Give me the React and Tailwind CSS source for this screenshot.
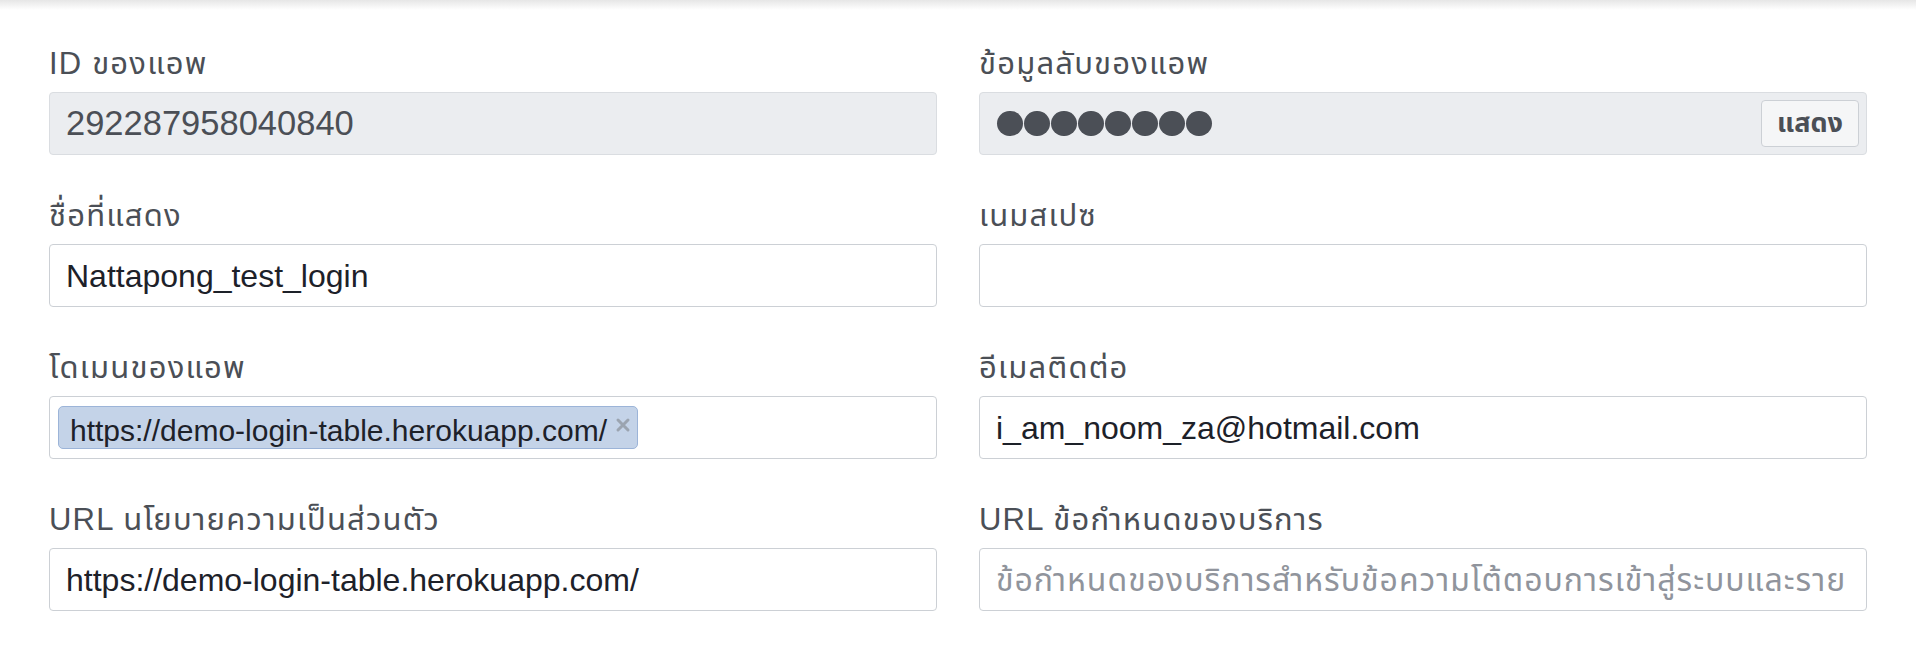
import React from 'react';

const thai = "font-['Liberation_Sans','Noto_Sans_Thai','Noto_Sans_Thai_Looped','Noto_Sans',sans-serif]";

function Field({ label, children }) {
  return (
    <div className="flex flex-col">
      <label className={`${thai} h-[44px] leading-[44px] mb-[6px] text-[31px] tracking-[1.2px] text-[#4b4f56] whitespace-nowrap`}>
        {label}
      </label>
      {children}
    </div>
  );
}

function Box({ disabled, children, className = '' }) {
  return (
    <div
      className={`h-[63px] rounded-[4px] border flex items-center overflow-hidden ${
        disabled ? 'bg-[#ebedf0] border-[#dadde1]' : 'bg-white border-[#ccd0d5]'
      } ${className}`}
    >
      {children}
    </div>
  );
}

export default function App() {
  return (
    <div className="relative bg-white min-h-[648px] w-[1916px]">
      <div className="absolute top-0 left-0 right-0 h-[10px] bg-gradient-to-b from-[#e6e6e6] to-white" />
      <div className="relative grid grid-cols-2 gap-x-[42px] gap-y-[39px] px-[49px] pt-[42px]">
        <Field label="ID ของแอพ">
          <Box disabled className="pl-[16px]">
            <span className="font-['Liberation_Sans',sans-serif] text-[34.5px] text-[#4b4f56]">292287958040840</span>
          </Box>
        </Field>

        <Field label="ข้อมูลลับของแอพ">
          <Box disabled className="pl-[17px] pr-[7px] justify-between">
            <div className="flex gap-[1px]">
              {Array.from({ length: 8 }).map((_, i) => (
                <span key={i} className="w-[26px] h-[25px] rounded-full bg-[#4b4f56]" />
              ))}
            </div>
            <button
              type="button"
              className={`${thai} h-[47px] w-[98px] rounded-[4px] border border-[#ccd0d5] bg-[#f5f6f7] text-[27px] font-bold text-[#4b4f56]`}
            >
              แสดง
            </button>
          </Box>
        </Field>

        <Field label="ชื่อที่แสดง">
          <Box className="pl-[16px]">
            <span className="font-['Liberation_Sans',sans-serif] text-[32px] text-[#1d2129]">Nattapong_test_login</span>
          </Box>
        </Field>

        <Field label="เนมสเปซ">
          <Box />
        </Field>

        <Field label="โดเมนของแอพ">
          <Box className="pl-[8px]">
            <div className="h-[43px] flex items-center rounded-[5px] border border-[#9cb4d8] bg-[#c4d3e8] pl-[11px] pr-[6px]">
              <span className="font-['Liberation_Sans',sans-serif] text-[30px] text-[#1d2129] leading-none mt-[6px]">
                https://demo-login-table.herokuapp.com/
              </span>
              <svg className="ml-[8px] -mt-[6px]" width="16" height="16" viewBox="0 0 16 16">
                <path d="M3 3 L13 13 M13 3 L3 13" stroke="#9ba4b0" strokeWidth="3" strokeLinecap="round" />
              </svg>
            </div>
          </Box>
        </Field>

        <Field label="อีเมลติดต่อ">
          <Box className="pl-[16px]">
            <span className="font-['Liberation_Sans',sans-serif] text-[32px] text-[#1d2129]">i_am_noom_za@hotmail.com</span>
          </Box>
        </Field>

        <Field label="URL นโยบายความเป็นส่วนตัว">
          <Box className="pl-[16px]">
            <span className="font-['Liberation_Sans',sans-serif] text-[32px] text-[#1d2129]">https://demo-login-table.herokuapp.com/</span>
          </Box>
        </Field>

        <Field label="URL ข้อกำหนดของบริการ">
          <Box className="pl-[16px]">
            <span className={`${thai} text-[32px] tracking-[1px] text-[#90949c] whitespace-nowrap`}>
              ข้อกำหนดของบริการสำหรับข้อความโต้ตอบการเข้าสู่ระบบและราย
            </span>
          </Box>
        </Field>
      </div>
    </div>
  );
}
